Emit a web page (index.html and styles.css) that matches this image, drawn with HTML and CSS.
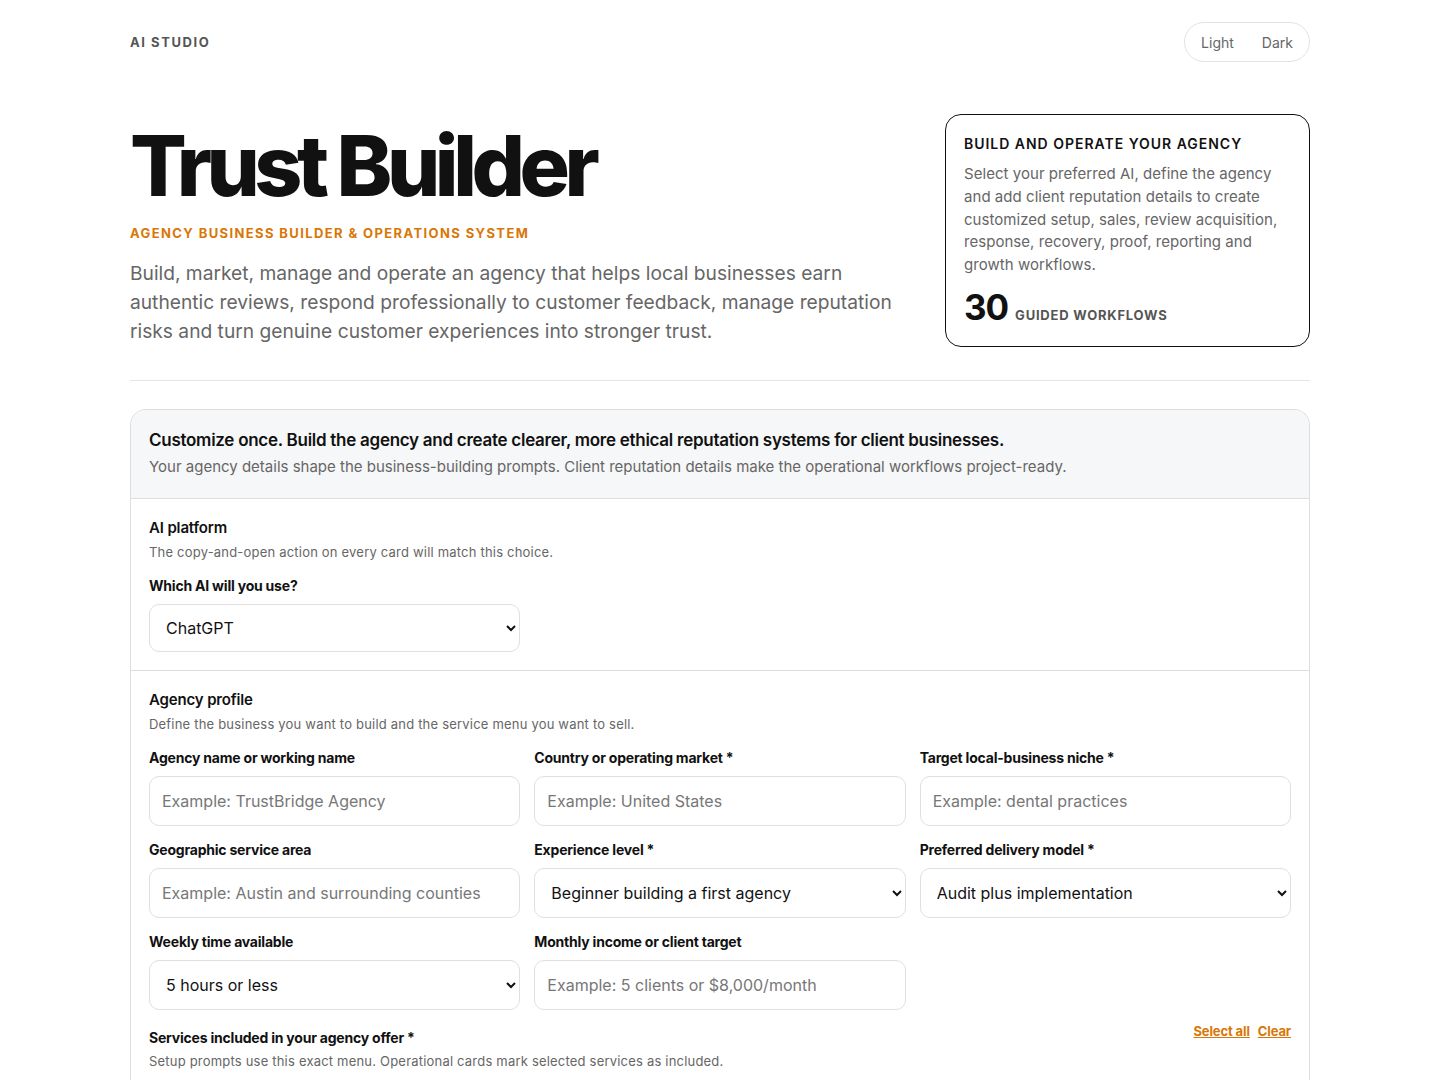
FILE: index.html
```html
<!DOCTYPE html>
<html lang="en">
<head>
<meta charset="utf-8">
<title>Trust Builder</title>
<link rel="stylesheet" href="styles.css">
</head>
<body>
<div class="page">
  <header class="topbar">
    <div class="brand">AI STUDIO</div>
    <div class="theme-toggle">
      <button class="theme-btn" type="button">Light</button>
      <button class="theme-btn" type="button">Dark</button>
    </div>
  </header>

  <section class="hero">
    <div class="hero-main">
      <h1 class="title">Trust Builder</h1>
      <p class="kicker">AGENCY BUSINESS BUILDER &amp; OPERATIONS SYSTEM</p>
      <p class="lead">Build, market, manage and operate an agency that helps local businesses earn authentic reviews, respond professionally to customer feedback, manage reputation risks and turn genuine customer experiences into stronger trust.</p>
    </div>
    <aside class="hero-card">
      <h2 class="card-title">BUILD AND OPERATE YOUR AGENCY</h2>
      <p class="card-text">Select your preferred AI, define the agency and add client reputation details to create customized setup, sales, review acquisition, response, recovery, proof, reporting and growth workflows.</p>
      <div class="card-stat"><span class="stat-num">30</span><span class="stat-label">GUIDED WORKFLOWS</span></div>
    </aside>
  </section>

  <hr class="divider">

  <section class="panel">
    <div class="panel-head">
      <h2 class="panel-title">Customize once. Build the agency and create clearer, more ethical reputation systems for client businesses.</h2>
      <p class="panel-sub">Your agency details shape the business-building prompts. Client reputation details make the operational workflows project-ready.</p>
    </div>

    <div class="block">
      <h3 class="block-title">AI platform</h3>
      <p class="block-sub">The copy-and-open action on every card will match this choice.</p>
      <label class="field field-ai">
        <span class="label">Which AI will you use?</span>
        <select class="control select select-ai">
          <option>ChatGPT</option>
        </select>
      </label>
    </div>

    <div class="block">
      <h3 class="block-title">Agency profile</h3>
      <p class="block-sub">Define the business you want to build and the service menu you want to sell.</p>
      <div class="grid">
        <label class="field">
          <span class="label">Agency name or working name</span>
          <input class="control" type="text" placeholder="Example: TrustBridge Agency">
        </label>
        <label class="field">
          <span class="label">Country or operating market *</span>
          <input class="control" type="text" placeholder="Example: United States">
        </label>
        <label class="field">
          <span class="label">Target local-business niche *</span>
          <input class="control" type="text" placeholder="Example: dental practices">
        </label>
        <label class="field">
          <span class="label">Geographic service area</span>
          <input class="control" type="text" placeholder="Example: Austin and surrounding counties">
        </label>
        <label class="field">
          <span class="label">Experience level *</span>
          <select class="control select"><option>Beginner building a first agency</option></select>
        </label>
        <label class="field">
          <span class="label">Preferred delivery model *</span>
          <select class="control select"><option>Audit plus implementation</option></select>
        </label>
        <label class="field">
          <span class="label">Weekly time available</span>
          <select class="control select"><option>5 hours or less</option></select>
        </label>
        <label class="field">
          <span class="label">Monthly income or client target</span>
          <input class="control" type="text" placeholder="Example: 5 clients or $8,000/month">
        </label>
      </div>
      <div class="services-head">
        <div>
          <span class="label">Services included in your agency offer *</span>
          <p class="block-sub services-sub">Setup prompts use this exact menu. Operational cards mark selected services as included.</p>
        </div>
        <div class="links">
          <a class="link" href="#">Select all</a>
          <a class="link" href="#">Clear</a>
        </div>
      </div>
    </div>
  </section>
</div>
</body>
</html>
```

FILE: styles.css
```css
* { box-sizing: border-box; }
html, body { margin: 0; padding: 0; background: #fff; }
body {
  font-family: Inter, "Noto Sans", "Liberation Sans", sans-serif;
  color: #111;
  -webkit-font-smoothing: antialiased;
}
.page { width: 1180px; margin: 0 auto; }

.topbar {
  display: flex;
  align-items: center;
  justify-content: space-between;
  padding-top: 22px;
  height: 62px;
}
.brand {
  font-size: 13px;
  font-weight: 700;
  letter-spacing: 0.12em;
  color: #555;
}
.theme-toggle {
  display: flex;
  align-items: center;
  height: 40px;
  border: 1px solid #e3e3e3;
  border-radius: 20px;
  padding: 0 2px;
}
.theme-btn {
  font-family: inherit;
  font-size: 14px;
  color: #666;
  background: transparent;
  border: 0;
  padding: 0 14px;
  height: 32px;
  cursor: pointer;
}

.hero {
  display: grid;
  grid-template-columns: 1fr 365px;
  gap: 45px;
  margin-top: 52px;
  align-items: start;
}
.hero-main { padding-top: 9px; }
.title {
  margin: 0;
  font-size: 84px;
  line-height: 86px;
  font-weight: 800;
  letter-spacing: -0.065em;
  color: #111;
}
.kicker {
  margin: 16px 0 0;
  font-size: 13px;
  font-weight: 700;
  letter-spacing: 0.107em;
  color: #d97706;
}
.lead {
  margin: 18px 0 0;
  font-size: 19.2px;
  line-height: 29px;
  color: #666;
}
.hero-card {
  border: 1px solid #111;
  border-radius: 16px;
  padding: 19px 18px 19px;
}
.card-title {
  margin: 0;
  font-size: 14px;
  font-weight: 600;
  letter-spacing: 0.07em;
  color: #111;
  line-height: 20px;
}
.card-text {
  margin: 9px 0 0;
  font-size: 15px;
  line-height: 22.8px;
  letter-spacing: 0.003em;
  color: #666;
}
.card-stat {
  display: flex;
  align-items: baseline;
  gap: 7px;
  margin-top: 10px;
}
.stat-num {
  font-size: 35px;
  font-weight: 700;
  letter-spacing: -0.03em;
  line-height: 40px;
}
.stat-label {
  font-size: 13px;
  font-weight: 700;
  letter-spacing: 0.06em;
  color: #555;
}

.divider {
  border: 0;
  border-top: 1px solid #e5e5e5;
  margin: 33px 0 28px;
}

.panel {
  border: 1px solid #dedede;
  border-bottom: 0;
  border-radius: 16px 16px 0 0;
  overflow: hidden;
}
.panel-head {
  background: #f6f7f8;
  padding: 19px 18px 21px;
  border-bottom: 1px solid #dedede;
}
.panel-title {
  margin: 0;
  font-size: 17px;
  font-weight: 600;
  line-height: 22px;
  letter-spacing: -0.016em;
}
.panel-sub {
  margin: 6px 0 0;
  font-size: 15px;
  line-height: 20px;
  color: #666;
}
.block {
  padding: 18px 18px 18px;
  border-bottom: 1px solid #dedede;
}
.block:last-child { border-bottom: 0; }
.block-title {
  margin: 0;
  font-size: 15px;
  font-weight: 600;
  line-height: 22px;
  letter-spacing: -0.01em;
}
.block-sub {
  margin: 4px 0 0;
  font-size: 13px;
  line-height: 18px;
  letter-spacing: 0.2px;
  color: #666;
}
.field { display: flex; flex-direction: column; }
.field-ai { width: 371px; margin-top: 16px; }
.label {
  font-size: 14px;
  font-weight: 700;
  line-height: 18px;
  letter-spacing: -0.015em;
  color: #111;
}
.control {
  margin-top: 9px;
  height: 50px;
  width: 100%;
  border: 1px solid #e0e0e0;
  border-radius: 10px;
  background: #fff;
  font-family: inherit;
  font-size: 16px;
  color: #111;
  padding: 0 12px;
}
.control::placeholder { color: #777; }
.select { padding: 0 12px 0 12px; }
.select-ai { height: 48px; }
.grid {
  display: grid;
  grid-template-columns: repeat(3, 1fr);
  column-gap: 14px;
  row-gap: 15px;
  margin-top: 16px;
}
.services-head {
  display: flex;
  justify-content: space-between;
  align-items: flex-start;
  margin-top: 17px;
}
.services-sub { margin-top: 5px; }
.links { display: flex; gap: 8px; margin-top: -4px; }
.link {
  font-size: 13px;
  font-weight: 700;
  color: #d97706;
  text-decoration: underline;
  letter-spacing: -0.01em;
}
```
